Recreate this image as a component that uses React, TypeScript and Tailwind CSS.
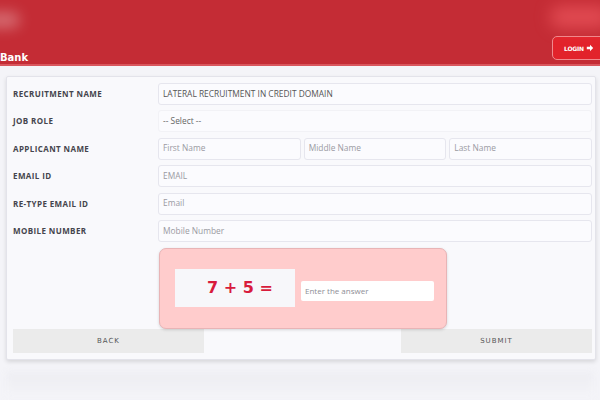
import React from "react";

const labelCls =
  "w-[145px] shrink-0 text-[8px] font-bold tracking-[0.4px] text-[#45454d] font-['Open_Sans','DejaVu_Sans',sans-serif]";
const boxCls =
  "h-[22px] flex items-center px-[4px] bg-[#fbfbfe] border border-[#e6e6ee] rounded-[3px] text-[8.4px] font-['Open_Sans',sans-serif]";

function Row({ label, children }: { label: string; children: React.ReactNode }) {
  return (
    <div className="flex items-center h-[22px]">
      <div className={labelCls}>{label}</div>
      <div className="flex-1 flex gap-[3px]">{children}</div>
    </div>
  );
}

export default function App() {
  return (
    <div className="w-[600px] h-[400px] overflow-hidden bg-[#f4f4f8] font-['Open_Sans',sans-serif] relative">
      {/* Header */}
      <header className="h-[66px] bg-[#c42c35] border-b-[2px] border-[#d9565d] flex items-end justify-between relative overflow-hidden">
        <div className="absolute -left-[16px] top-[12px] w-[36px] h-[16px] rounded-full bg-white/30 blur-[7px]" />
        <div className="absolute right-[-10px] top-[6px] w-[60px] h-[22px] rounded-full bg-[#ff6a70]/50 blur-[8px]" />
        <span className="text-white font-bold text-[10px] leading-none mb-[1px] font-['DejaVu_Sans',sans-serif]">Bank</span>
        <button className="mb-[4px] mr-[-6px] h-[24px] w-[54px] rounded-[5px] bg-[#e2232b] border border-[#f08a8e] flex items-center pl-[11px] gap-[2px] text-white">
          <span className="text-[6px] font-bold font-['DejaVu_Sans',sans-serif] tracking-[-0.2px]">LOGIN</span>
          <svg width="8" height="8" viewBox="0 0 10 10">
            <path d="M1 3.5h4V1l4 4-4 4V6.5H1z" fill="white" />
          </svg>
        </button>
      </header>

      {/* Card */}
      <div className="ml-[6px] mt-[10px] w-[590px] h-[284px] bg-[#f9f9fc] border border-[#e3e3ea] rounded-[2px] shadow-[0_2px_4px_rgba(0,0,0,0.12)] pt-[6px] pl-[6px] pr-[3px] flex flex-col">
        <div className="flex flex-col gap-[5.4px]">
          <Row label="RECRUITMENT NAME">
            <div className={`${boxCls} flex-1 text-[#555]`}>LATERAL RECRUITMENT IN CREDIT DOMAIN</div>
          </Row>
          <Row label="JOB ROLE">
            <div className={`${boxCls} flex-1 text-[#666] border-[#f2f2f6] bg-[#f9f9fc]`}>-- Select --</div>
          </Row>
          <Row label="APPLICANT NAME">
            <div className={`${boxCls} flex-1 text-[#9a9aa2]`}>First Name</div>
            <div className={`${boxCls} flex-1 text-[#9a9aa2]`}>Middle Name</div>
            <div className={`${boxCls} flex-1 text-[#9a9aa2]`}>Last Name</div>
          </Row>
          <Row label="EMAIL ID">
            <div className={`${boxCls} flex-1 text-[#9a9aa2]`}>EMAIL</div>
          </Row>
          <Row label="RE-TYPE EMAIL ID">
            <div className={`${boxCls} flex-1 text-[#9a9aa2]`}>Email</div>
          </Row>
          <Row label="MOBILE NUMBER">
            <div className={`${boxCls} flex-1 text-[#9a9aa2]`}>Mobile Number</div>
          </Row>
        </div>

        {/* Captcha */}
        <div className="mt-[6px] ml-[146px] w-[288px] h-[81px] bg-[#ffcccc] border border-[#e8b4b6] rounded-[7px] shadow-[0_1px_3px_rgba(0,0,0,0.15)] flex items-center pl-[15px] gap-[6px] relative z-10">
          <div className="w-[120px] h-[38px] bg-[#f7f7fa] flex items-center justify-center pl-[10px]">
            <span className="text-[#d81b3c] font-bold text-[16px] font-['DejaVu_Sans',sans-serif]">7 + 5 =</span>
          </div>
          <div className="w-[133px] h-[20px] mt-[6px] bg-white rounded-[2px] flex items-center px-[4px] text-[8px] text-[#8e8e96]">
            Enter the answer
          </div>
        </div>

        {/* Buttons */}
        <div className="flex justify-between">
          <div className="w-[191px] h-[24px] bg-[#ebebeb] flex items-center justify-center text-[7px] tracking-[1px] text-[#555] font-['DejaVu_Sans',sans-serif]">
            BACK
          </div>
          <div className="w-[191px] h-[24px] bg-[#ebebeb] flex items-center justify-center text-[7px] tracking-[1px] text-[#555] font-['DejaVu_Sans',sans-serif]">
            SUBMIT
          </div>
        </div>
      </div>

      {/* faded reflection */}
      <div className="mx-[6px] mt-[12px] h-[26px] bg-gradient-to-b from-[#ededf2] to-[#f4f4f8] blur-[3px]" />
    </div>
  );
}
